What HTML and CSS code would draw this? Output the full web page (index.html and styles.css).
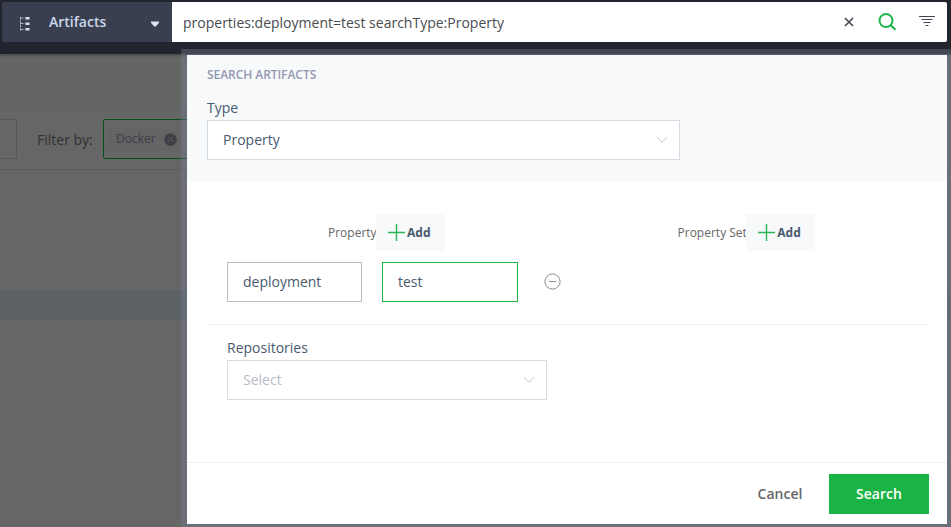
FILE: index.html
```html
<!DOCTYPE html>
<html lang="en">
<head>
<meta charset="utf-8">
<title>Search Artifacts</title>
<link rel="stylesheet" href="styles.css">
</head>
<body>
<header class="topbar">
  <div class="scope">
    <svg class="scope-icon" width="12" height="16" viewBox="0 0 12 16"><path d="M1.500 1v13.500M1.500 2h4M1.500 7.500h4M1.500 13.500h4" fill="none" stroke="#a9b4ca" stroke-width="1" stroke-dasharray="3 .7"/><g fill="#d5deef"><rect x="6.500" y="1" width="4" height="2.500"/><rect x="6.500" y="6.500" width="4" height="2.500"/><rect x="6.500" y="12" width="4" height="2.500"/></g></svg>
    <span class="scope-label">Artifacts</span>
    <svg class="scope-caret" width="8" height="6" viewBox="0 0 8 6"><path d="M0 .5h8v1.200L4.800 5.500H3.200L0 1.700z" fill="#dce5f5"/></svg>
  </div>
  <div class="query">
    <span class="query-text">properties:deployment=test searchType:Property</span>
    <svg class="clear" width="10" height="10" viewBox="0 0 10 10"><path d="M1 1l8 8M9 1L1 9" stroke="#414550" stroke-width="1.600"/></svg>
    <svg class="find" width="19" height="18" viewBox="0 0 19 18"><circle cx="8" cy="7.500" r="6.500" fill="none" stroke="#1db54a" stroke-width="2"/><path d="M12.500 12l5 4.800" stroke="#1db54a" stroke-width="2.100"/></svg>
    <svg class="filter" width="16" height="12" viewBox="0 0 16 12"><path d="M0 1.500h16M2.500 4.500h11M4.500 7.500h7M6.500 10.500h3" stroke="#414550" stroke-width="1.200"/></svg>
  </div>
</header>
<main class="page">
  <div class="heading"></div>
  <div class="filters">
    <div class="filter-input"></div>
    <span class="filter-label">Filter by:</span>
    <div class="filter-box"><span class="tag">Docker<svg width="13" height="13" viewBox="0 0 13 13"><circle cx="6.500" cy="6.500" r="6.300" fill="#3f4046"/><path d="M4 4l5 5M9 4L4 9" stroke="#5a5a5f"/></svg></span></div>
  </div>
  <div class="row-highlight"></div>
</main>
<section class="dialog">
  <div class="type-panel">
    <h2>SEARCH ARTIFACTS</h2>
    <label>Type</label>
    <div class="select type-select"><span>Property</span><svg width="12" height="8" viewBox="0 0 12 8"><path d="M.8 1.200L6 6.300l5.200-5.100" fill="none" stroke="#bfc3c9"/></svg></div>
  </div>
  <div class="criteria">
    <div class="adders">
      <div class="adder"><span>Property</span><button class="add"><svg width="17" height="17" viewBox="0 0 17 17"><path d="M0 8.500h17M8.500 0v17" stroke="#2bb653" stroke-width="1.400"/></svg>Add</button></div>
      <div class="adder"><span>Property Set</span><button class="add"><svg width="17" height="17" viewBox="0 0 17 17"><path d="M0 8.500h17M8.500 0v17" stroke="#2bb653" stroke-width="1.400"/></svg>Add</button></div>
    </div>
    <div class="pair">
      <div class="field key">deployment</div>
      <div class="field value">test</div>
      <svg class="remove" width="17" height="17" viewBox="0 0 17 17"><circle cx="8.500" cy="8.500" r="7.600" fill="none" stroke="#8c8c8c"/><path d="M5 8.500h7" stroke="#8c8c8c"/></svg>
    </div>
  </div>
  <div class="repositories">
    <label>Repositories</label>
    <div class="select repo-select"><span>Select</span><svg width="12" height="8" viewBox="0 0 12 8"><path d="M.8 1.200L6 6.300l5.200-5.100" fill="none" stroke="#bfc3c9"/></svg></div>
  </div>
  <footer class="actions">
    <button class="cancel">Cancel</button>
    <button class="submit">Search</button>
  </footer>
</section>
</body>
</html>
```
FILE: styles.css
```css
* { box-sizing: border-box; }
body {
  margin: 0;
  height: 527px;
  position: relative;
  overflow: hidden;
  background: #666;
  color: #495a6e;
  font: 14px/20px "Open Sans", "Noto Sans", sans-serif;
}
svg { display: block; flex: none; }
button { border: 0; margin: 0; padding: 0; font: inherit; color: inherit; background: none; }

.topbar {
  display: flex;
  height: 54px;
  padding: 2px 4px 12px 2px;
  background: #22252e;
  box-shadow: 0 1px 3px rgba(0, 0, 0, .4);
  position: relative;
}
.scope {
  display: flex;
  align-items: center;
  width: 170px;
  padding: 0 13px 0 17px;
  background: #393f4e;
  border-radius: 2px 0 0 2px;
  color: #cbd7ec;
  font-weight: 600;
}
.scope-icon { margin-top: 3px; }
.scope-label { margin-left: 18px; }
.scope-caret { margin: 4px 0 0 auto; }
.query {
  display: flex;
  align-items: center;
  flex: 1;
  padding: 0 12.500px 0 11px;
  background: #fff;
  border-radius: 0 2px 2px 0;
  color: #484b50;
}
.query-text { flex: 1; padding-top: 2px; }
.clear { margin-right: 24px; }
.find { margin-right: 22px; }
.filter { margin-top: -2px; }

.page { height: 473px; }
.heading { height: 55px; background: #646664; border-bottom: 1px solid #626262; }
.filters {
  display: flex;
  align-items: center;
  height: 61px;
  border-bottom: 1px solid #5c5c5c;
  color: #303234;
}
.filter-input { width: 17px; height: 40px; border: 1px solid #555659; border-left: 0; border-radius: 0 2px 2px 0; }
.filter-label { margin-left: 20px; width: 66px; padding-top: 2px; }
.filter-box { width: 140px; height: 40px; padding: 7px 5px; border: 1px solid #084c20; border-radius: 2px; }
.tag { display: inline-flex; align-items: center; gap: 8px; height: 24px; padding: 0 4px 0 7px; background: #646464; color: #3c3e48; font-size: 12px; }
.row-highlight { height: 30px; margin-top: 120px; background: #5c6265; }

.dialog {
  position: absolute;
  left: 181px;
  top: 49px;
  width: 772px;
  height: 481px;
  border: 6px solid rgba(117, 125, 145, .4);
  background: #fff;
  background-clip: padding-box;
  border-radius: 2px;
}
.type-panel { height: 127px; padding: 10px 20px 0; background: #f7f9fb; }
h2 { margin: 0 0 13px; color: #9297b0; font-size: 12px; line-height: 20px; font-weight: 600; letter-spacing: -.05px; }
label { display: block; line-height: 20px; }
.select {
  display: flex;
  align-items: center;
  justify-content: space-between;
  height: 40px;
  padding: 0 11px 0 15px;
  border: 1px solid #d7d9e3;
  background: #fff;
}
.type-select { width: 473px; margin-top: 2px; }
.criteria { height: 143px; margin: 0 20px; padding: 32px 20px 0; border-bottom: 1px solid #eeeef5; }
.adders { display: flex; gap: 233px; padding-left: 101px; color: #666; font-size: 12px; }
.adder { display: flex; align-items: center; }
.adder > span { margin-right: -.6px; }
.add {
  display: flex;
  align-items: center;
  gap: 2px;
  width: 68.500px;
  height: 37px;
  padding-left: 12px;
  border-radius: 2px;
  background: #f7f9fb;
  color: #495a6e;
  font-weight: 700;
}
.pair { display: flex; align-items: center; margin-top: 11px; }
.field { height: 40px; border: 1px solid #b9bdc9; padding: 9px 15px; }
.key { width: 135px; margin-right: 20px; }
.value { width: 136px; border-color: #1db54a; }
.remove { margin: -1px 0 0 26px; }
.repositories { height: 137px; padding: 13px 40px 0; }
.repo-select { width: 320px; margin-top: 2px; color: #b9bdc7; }
.actions {
  display: flex;
  justify-content: flex-end;
  height: 62px;
  padding: 11px 18px 0 0;
  border-top: 1px solid #eeeef5;
  font-weight: 600;
}
.cancel { width: 98px; height: 40px; color: #666; }
.submit { width: 100px; height: 40px; background: #1ab446; color: #fff; }
```
